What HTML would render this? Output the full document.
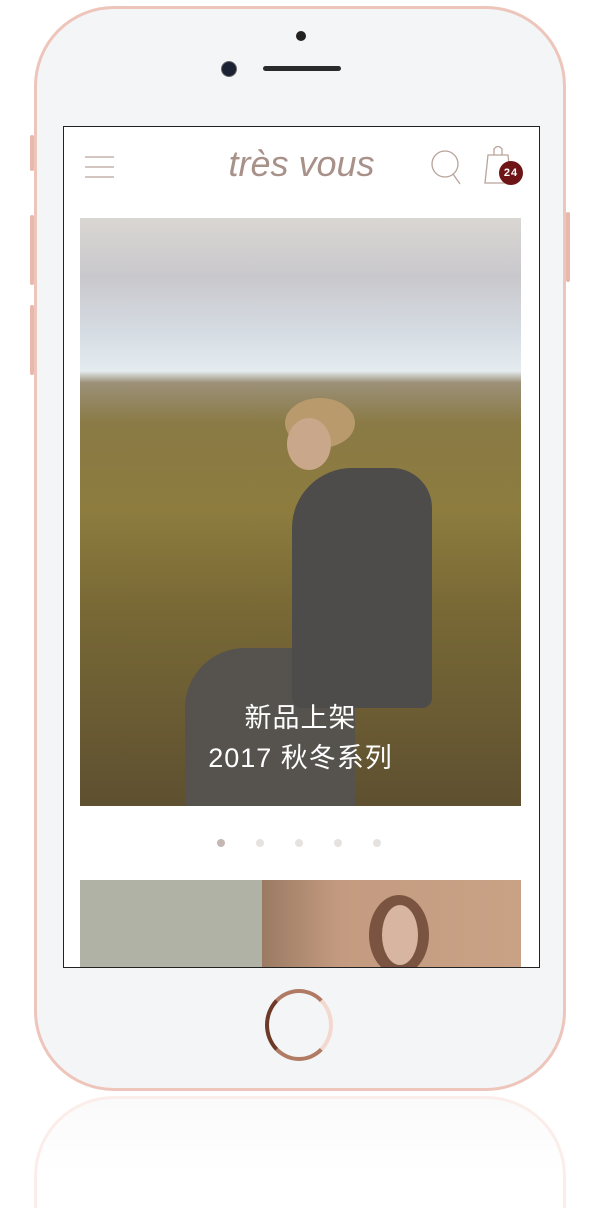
<!DOCTYPE html>
<html><head><meta charset="utf-8"><style>
html,body{margin:0;width:600px;height:1208px;overflow:hidden}
body{background:#fff;position:relative;font-family:"Liberation Sans","Noto Sans CJK SC",sans-serif}
.phone{position:absolute;left:34px;top:6px;width:532px;height:1085px;border:3px solid #eec5bb;border-radius:80px;background:#f4f5f7;box-sizing:border-box}
.refl{position:absolute;left:34px;top:1096px;width:532px;height:112px;border:3px solid #fbeae6;border-bottom:none;border-radius:80px 80px 0 0;background:linear-gradient(#fafafa,#fff 70%);box-sizing:border-box;opacity:.8}
.btn{position:absolute;width:4px;background:#e9b8ad;border-radius:2px}
.screen{position:absolute;left:63px;top:126px;width:477px;height:842px;border:1.5px solid #222;background:#fff;box-sizing:border-box;overflow:hidden}
.hero{position:absolute;left:16px;top:91px;width:441px;height:588px;overflow:hidden;background:
linear-gradient(180deg,#d9d6d2 0%,#c9c8cc 10%,#d6dde4 20%,#e5ecf0 26%,#9c9078 28%,#8a7a45 35%,#8d7c3e 50%,#7a6a36 65%,#6e5f34 80%,#5e5030 100%)}
.coat{position:absolute;left:212px;top:250px;width:140px;height:240px;background:#4d4c4b;border-radius:60px 40px 10px 10px}
.legs{position:absolute;left:105px;top:430px;width:170px;height:158px;background:#56534f;border-radius:60px 20px 0 0}
.head{position:absolute;left:207px;top:200px;width:44px;height:52px;background:#c9a78b;border-radius:50%}
.hair{position:absolute;left:205px;top:180px;width:70px;height:50px;background:#b89a6c;border-radius:50%}
.cap{position:absolute;left:0;width:100%;text-align:center;color:#fff;font-size:27px;letter-spacing:1px}
.dot{position:absolute;top:712px;width:8px;height:8px;border-radius:50%;background:#e6e2e0}
</style></head><body>
<div class="refl"></div>
<div class="phone"></div>
<div class="btn" style="left:30px;top:135px;height:36px"></div>
<div class="btn" style="left:30px;top:215px;height:70px"></div>
<div class="btn" style="left:30px;top:305px;height:70px"></div>
<div class="btn" style="left:566px;top:212px;height:70px"></div>
<div style="position:absolute;left:296px;top:31px;width:10px;height:10px;border-radius:50%;background:#222"></div>
<div style="position:absolute;left:221px;top:61px;width:14px;height:14px;border-radius:50%;background:#1b2233;border:1px solid #666"></div>
<div style="position:absolute;left:263px;top:66px;width:78px;height:5px;border-radius:3px;background:#2a2a2a"></div>
<div style="position:absolute;left:265px;top:989px;width:68px;height:72px;border-radius:50%;border:4px solid #b07a63;border-right-color:#f3d8cf;border-left-color:#6e3a28;box-sizing:border-box"></div>
<div class="screen">
 <svg style="position:absolute;left:20px;top:28px" width="32" height="24"><g stroke="#b9a39b" stroke-width="1.3"><line x1="1" y1="2" x2="30" y2="2"/><line x1="1" y1="12" x2="30" y2="12"/><line x1="1" y1="22" x2="30" y2="22"/></g></svg>
 <div style="position:absolute;left:0;width:100%;top:16px;text-align:center;font-size:36px;color:#a89189;font-style:italic;font-family:'Liberation Sans',sans-serif;letter-spacing:0px">très vous</div>
 <svg style="position:absolute;left:366px;top:21px" width="36" height="40"><circle cx="15" cy="16" r="13" fill="none" stroke="#b9a39b" stroke-width="1.3"/><line x1="23" y1="26" x2="30" y2="36" stroke="#b9a39b" stroke-width="1.3"/></svg>
 <svg style="position:absolute;left:420px;top:16px" width="30" height="42"><path d="M4 12 H24 L27 40 H1 Z" fill="none" stroke="#b9a39b" stroke-width="1.3"/><path d="M10 12 V6 Q14 1 18 6 V12" fill="none" stroke="#b9a39b" stroke-width="1.3"/></svg>
 <div style="position:absolute;left:435px;top:34px;width:24px;height:24px;border-radius:50%;background:#6f1416;color:#fff;font-size:11px;font-weight:bold;text-align:center;line-height:24px;letter-spacing:1px">24</div>
 <div class="hero">
  <div class="legs"></div><div class="coat"></div><div class="hair"></div><div class="head"></div>
  <div class="cap" style="top:478px">新品上架</div>
  <div class="cap" style="top:518px">2017 秋冬系列</div>
 </div>
 <div class="dot" style="left:153px;background:#c5b7b2"></div>
 <div class="dot" style="left:192px"></div>
 <div class="dot" style="left:231px"></div>
 <div class="dot" style="left:270px"></div>
 <div class="dot" style="left:309px"></div>
 <div style="position:absolute;left:16px;top:753px;width:182px;height:90px;background:#b1b2a6"></div>
 <div style="position:absolute;left:198px;top:753px;width:259px;height:90px;background:linear-gradient(90deg,#9b7a63,#c49b80 30%,#c9a286)"></div>
 <div style="position:absolute;left:305px;top:768px;width:60px;height:80px;border-radius:50%;background:#7a5440"></div>
 <div style="position:absolute;left:318px;top:778px;width:36px;height:60px;border-radius:50%;background:#d7b5a0"></div>
</div>
</body></html>
